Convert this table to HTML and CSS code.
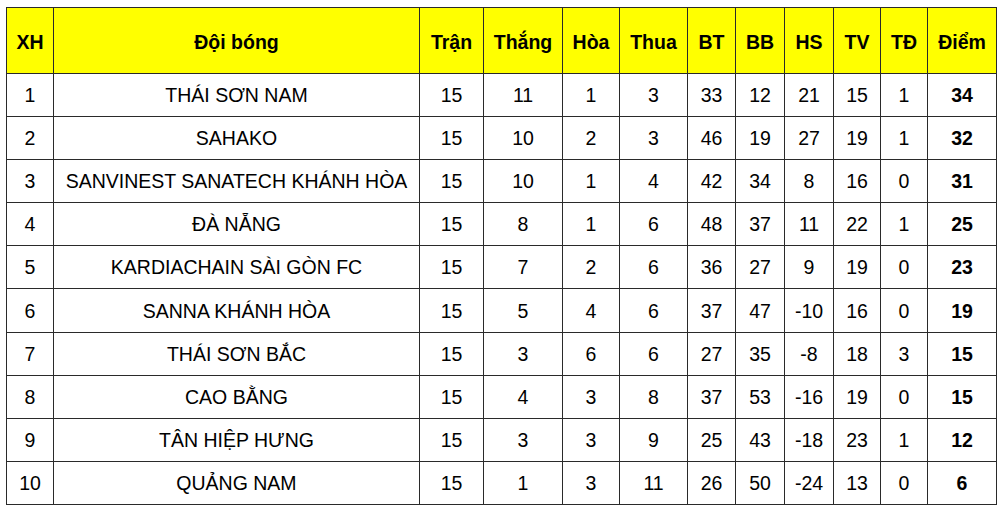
FILE: index.html
```html
<!DOCTYPE html>
<html lang="vi">
<head>
<meta charset="utf-8">
<title>Bảng xếp hạng</title>
<link rel="stylesheet" href="styles.css">
</head>
<body>
<table class="standings">
  <colgroup>
    <col class="c-xh"><col class="c-team"><col class="c-tran"><col class="c-thang"><col class="c-hoa"><col class="c-thua"><col class="c-bt"><col class="c-bb"><col class="c-hs"><col class="c-tv"><col class="c-td"><col class="c-diem">
  </colgroup>
  <thead>
    <tr><th>XH</th><th>Đội bóng</th><th>Trận</th><th>Thắng</th><th>Hòa</th><th>Thua</th><th>BT</th><th>BB</th><th>HS</th><th>TV</th><th>TĐ</th><th>Điểm</th></tr>
  </thead>
  <tbody>
    <tr><td>1</td><td>THÁI SƠN NAM</td><td>15</td><td>11</td><td>1</td><td>3</td><td>33</td><td>12</td><td>21</td><td>15</td><td>1</td><td class="pts">34</td></tr>
    <tr><td>2</td><td>SAHAKO</td><td>15</td><td>10</td><td>2</td><td>3</td><td>46</td><td>19</td><td>27</td><td>19</td><td>1</td><td class="pts">32</td></tr>
    <tr><td>3</td><td>SANVINEST SANATECH KHÁNH HÒA</td><td>15</td><td>10</td><td>1</td><td>4</td><td>42</td><td>34</td><td>8</td><td>16</td><td>0</td><td class="pts">31</td></tr>
    <tr><td>4</td><td>ĐÀ NẴNG</td><td>15</td><td>8</td><td>1</td><td>6</td><td>48</td><td>37</td><td>11</td><td>22</td><td>1</td><td class="pts">25</td></tr>
    <tr><td>5</td><td>KARDIACHAIN SÀI GÒN FC</td><td>15</td><td>7</td><td>2</td><td>6</td><td>36</td><td>27</td><td>9</td><td>19</td><td>0</td><td class="pts">23</td></tr>
    <tr><td>6</td><td>SANNA KHÁNH HÒA</td><td>15</td><td>5</td><td>4</td><td>6</td><td>37</td><td>47</td><td>-10</td><td>16</td><td>0</td><td class="pts">19</td></tr>
    <tr><td>7</td><td>THÁI SƠN BẮC</td><td>15</td><td>3</td><td>6</td><td>6</td><td>27</td><td>35</td><td>-8</td><td>18</td><td>3</td><td class="pts">15</td></tr>
    <tr><td>8</td><td>CAO BẰNG</td><td>15</td><td>4</td><td>3</td><td>8</td><td>37</td><td>53</td><td>-16</td><td>19</td><td>0</td><td class="pts">15</td></tr>
    <tr><td>9</td><td>TÂN HIỆP HƯNG</td><td>15</td><td>3</td><td>3</td><td>9</td><td>25</td><td>43</td><td>-18</td><td>23</td><td>1</td><td class="pts">12</td></tr>
    <tr><td>10</td><td>QUẢNG NAM</td><td>15</td><td>1</td><td>3</td><td>11</td><td>26</td><td>50</td><td>-24</td><td>13</td><td>0</td><td class="pts">6</td></tr>
  </tbody>
</table>
</body>
</html>
```
FILE: styles.css
```css
html, body {
  margin: 0;
  padding: 0;
  background: #fff;
}
body {
  padding: 7px 0 0 6px;
  font-family: "Liberation Sans", Arial, sans-serif;
  color: #000;
}
.standings {
  border-collapse: collapse;
  table-layout: fixed;
  width: 990px;
  font-size: 19.5px;
}
.standings th,
.standings td {
  border: 1px solid #2a2a2a;
  text-align: center;
  vertical-align: middle;
  padding: 0;
  white-space: nowrap;
}
.standings th {
  background: #ffff00;
  font-weight: bold;
  height: 62px;
  padding-top: 3px;
}
.standings td {
  height: 41.1px;
  padding-top: 1px;
}
.standings td.pts {
  font-weight: bold;
}
.c-xh { width: 47px; }
.c-team { width: 366px; }
.c-tran { width: 64px; }
.c-thang { width: 79px; }
.c-hoa { width: 57px; }
.c-thua { width: 68px; }
.c-bt { width: 48px; }
.c-bb { width: 49px; }
.c-hs { width: 49px; }
.c-tv { width: 47px; }
.c-td { width: 47px; }
.c-diem { width: 69px; }
```
